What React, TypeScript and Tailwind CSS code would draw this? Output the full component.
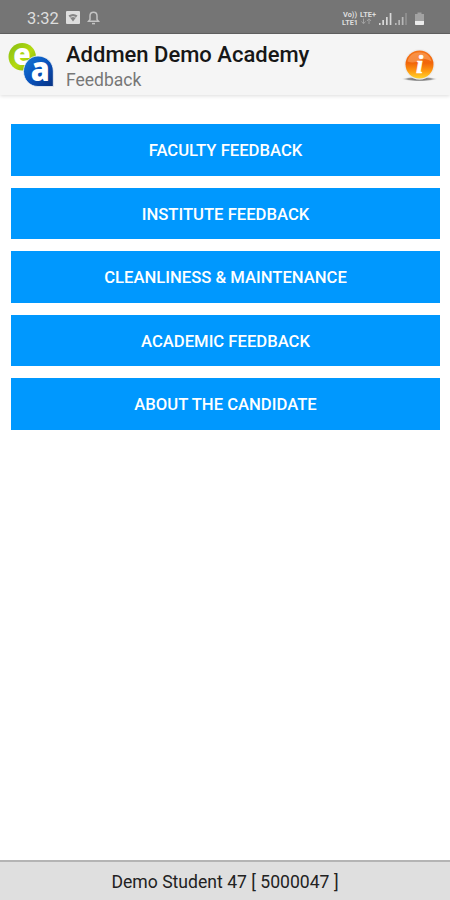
import React from "react";

const items = [
  "FACULTY FEEDBACK",
  "INSTITUTE FEEDBACK",
  "CLEANLINESS & MAINTENANCE",
  "ACADEMIC FEEDBACK",
  "ABOUT THE CANDIDATE",
];

function StatusBar() {
  return (
    <div className="h-[34px] shrink-0 bg-[#757575] border-b border-[#626262] flex items-center justify-between pl-[27px] pr-[25px] pt-[3px] text-[#dedede]">
      <div className="flex items-center">
        <span className="w-[39px] text-[16.5px] leading-none pt-[2px]">3:32</span>
        <svg className="-mt-px" width="14" height="13" viewBox="0 0 14 13">
          <rect width="14" height="13" rx="1" fill="#dedede" />
          <path d="M2.5 4.6Q7 1.6 11.5 4.6L7 10.4Z" fill="#858585" />
          <path d="M4.4 6.3Q7 4.7 9.6 6.3" fill="none" stroke="#dedede" strokeWidth="0.9" />
        </svg>
        <svg className="ml-[7px] -mt-px" width="13" height="14" viewBox="0 0 13 14" fill="none" stroke="#c4c4c4" strokeWidth="1.5">
          <path d="M1.5 10.3H11.5L10 8.5V5C10 2.8 8.6 1.3 6.5 1.3S3 2.8 3 5V8.5Z" />
          <path d="M5 12.6H8" />
        </svg>
      </div>
      <svg width="84" height="18" viewBox="0 0 84 18" fontFamily="Roboto, sans-serif" fontSize="7.5" fontWeight="700" fill="#dedede">
        <text x="2" y="7.5" textLength="14" lengthAdjust="spacingAndGlyphs">Vo))</text>
        <text x="19" y="7.5" textLength="16" lengthAdjust="spacingAndGlyphs">LTE+</text>
        <text x="1" y="15.5" textLength="16" lengthAdjust="spacingAndGlyphs">LTE1</text>
        <path d="M22.5 9.5V14.5M20.5 12.5L22.5 14.8L24.5 12.5M28 15V10M26 12L28 9.7L30 12" fill="none" stroke="#a2a2a2" />
        <path d="M38 14H39.6V16H38ZM41.3 11H43V16H41.3ZM45 8H46.7V16H45ZM48.7 4H50.4V16H48.7Z" fill="#d8d8d8" />
        <path d="M54 14H55.6V16H54ZM57.3 11H59V16H57.3ZM60.8 8H62.5V16H60.8Z" fill="#b8b8b8" />
        <path d="M64.2 4H65.8V16H64.2Z" fill="#939393" />
        <path d="M76.5 3.5H80.5V5H83V12.5H74V5H76.5Z" fill="#a2a2a2" />
        <path d="M74 12H83V15.2Q83 16 82.2 16H74.8Q74 16 74 15.2Z" fill="#ececec" />
      </svg>
    </div>
  );
}

function Logo() {
  return (
    <svg className="shrink-0 overflow-visible" width="48" height="48" viewBox="0 0 48 48" fontFamily="'Open Sans', sans-serif" fontWeight="800" fill="#fff">
      <defs>
        <linearGradient id="leaf" x1="0" y1="0" x2="1" y2="1">
          <stop offset="0" stopColor="#85bd13" />
          <stop offset="0.55" stopColor="#b5da10" />
          <stop offset="1" stopColor="#79aa08" />
        </linearGradient>
        <linearGradient id="drop" x1="0" y1="0" x2="1" y2="1">
          <stop offset="0" stopColor="#1679d5" />
          <stop offset="0.5" stopColor="#0953bd" />
          <stop offset="1" stopColor="#083282" />
        </linearGradient>
      </defs>
      <circle cx="14.2" cy="15.7" r="13.7" fill="url(#leaf)" />
      <text x="5.3" y="23.5" fontSize="30" textLength="17.5" lengthAdjust="spacingAndGlyphs">e</text>
      <path d="M30 15C38.5 15 45.3 21.5 45.3 30V45.5H30C21.5 45.5 15.5 38.5 15.5 30.5S21.5 15 30 15Z" fill="url(#drop)" stroke="#f5f5f5" strokeWidth="0.8" />
      <text x="22.8" y="40.3" fontSize="33" textLength="19" lengthAdjust="spacingAndGlyphs">a</text>
    </svg>
  );
}

function InfoIcon() {
  return (
    <svg width="38" height="36" viewBox="0 0 38 36">
      <defs>
        <linearGradient id="orb" x1="0" y1="0" x2="0" y2="1">
          <stop offset="0" stopColor="#f57518" />
          <stop offset="0.45" stopColor="#f1650a" />
          <stop offset="0.75" stopColor="#ff9d12" />
          <stop offset="1" stopColor="#ffd42c" />
        </linearGradient>
        <radialGradient id="ground">
          <stop offset="0" stopColor="#555" />
          <stop offset="0.65" stopColor="#999" />
          <stop offset="1" stopColor="#f5f5f5" stopOpacity="0" />
        </radialGradient>
      </defs>
      <ellipse cx="19.5" cy="32" rx="18.5" ry="2.4" fill="url(#ground)" />
      <circle cx="19.5" cy="17.5" r="15.3" fill="#ececec" />
      <circle cx="19.5" cy="17.5" r="14" fill="url(#orb)" />
      <path d="M7.5 14.5C9.5 2 29.5 2 31.5 14.5Q25.5 10 19.5 13.5T7.5 14.5Z" fill="#ffc18c" opacity="0.4" />
      <text x="19.5" y="26" textAnchor="middle" fontFamily="'Liberation Serif', serif" fontSize="26" fontWeight="700" fontStyle="italic" fill="#fff" stroke="#fff" strokeWidth="0.6">i</text>
    </svg>
  );
}

export default function App() {
  return (
    <div className="w-full h-screen flex flex-col bg-white font-['Roboto',sans-serif] overflow-hidden">
      <StatusBar />
      <header className="h-[61px] shrink-0 bg-[#f5f5f5] shadow-[0_1px_4px_rgba(0,0,0,0.14)] flex items-center pl-2 pr-3">
        <Logo />
        <div className="flex-1 pl-[10px] pt-[6px]">
          <h1 className="text-[22px] leading-[26px] font-medium text-[#171717]">Addmen Demo Academy</h1>
          <p className="text-[17.5px] leading-[25px] text-[#777777]">Feedback</p>
        </div>
        <InfoIcon />
      </header>
      <main className="flex-1 flex flex-col gap-3 pt-[29px] pl-[11px] pr-[10px]">
        {items.map((item) => (
          <button key={item} className="h-[51.5px] bg-[#0098fe] text-white text-[16.65px] font-medium pt-[4px]">
            {item}
          </button>
        ))}
      </main>
      <footer className="h-10 shrink-0 bg-[#dfdfdf] border-t-2 border-[#b4b4b4] flex items-center justify-center pt-[3px] text-[17.6px] text-[#222222]">
        Demo Student 47 [ 5000047 ]
      </footer>
    </div>
  );
}
